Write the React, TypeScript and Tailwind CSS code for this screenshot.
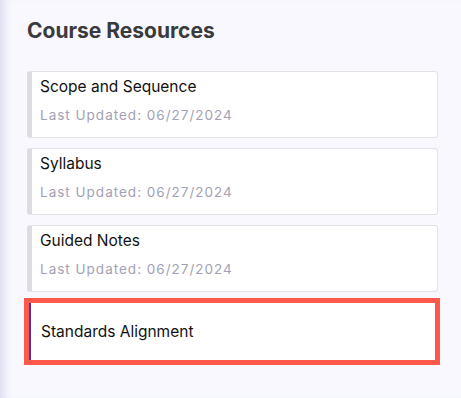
const resources = [
  { title: "Scope and Sequence", updated: "06/27/2024" },
  { title: "Syllabus", updated: "06/27/2024" },
  { title: "Guided Notes", updated: "06/27/2024" },
];

export default function App() {
  return (
    <div
      className="h-[398px] w-[461px] overflow-hidden bg-[#f8f8fe] pl-[27px] pt-[16px] shadow-[inset_10px_0_8px_-6px_rgba(200,200,235,0.6)]"
      style={{ fontFamily: "Inter, 'Liberation Sans', sans-serif" }}
    >
      <h1 className="text-[21px] font-bold leading-[30px] text-[#3b3b3d]">Course Resources</h1>

      <div className="mt-[25px] flex w-[411px] flex-col gap-[10px]">
        {resources.map((r) => (
          <div
            key={r.title}
            className="flex h-[67px] flex-col rounded-[3px] border border-l-[5px] border-[#e1e1e6] border-l-[#dcdce2] bg-white pl-[8px] pt-[4px]"
          >
            <span className="text-[15.5px] leading-[22px] text-[#111]">{r.title}</span>
            <span className="mt-[7px] text-[13.5px] leading-[20px] tracking-[1px] text-[#a3a1b6]">
              Last Updated: {r.updated}
            </span>
          </div>
        ))}

        <div className="-ml-[3px] -mt-[4px] h-[67px] w-[416px] border-[5px] border-[#fe5a4b] bg-white">
          <div className="flex h-full items-center border-l-2 border-[#4a2fc9] pl-[10px]">
            <span className="text-[15.5px] leading-[22px] text-[#111]">Standards Alignment</span>
          </div>
        </div>
      </div>
    </div>
  );
}
